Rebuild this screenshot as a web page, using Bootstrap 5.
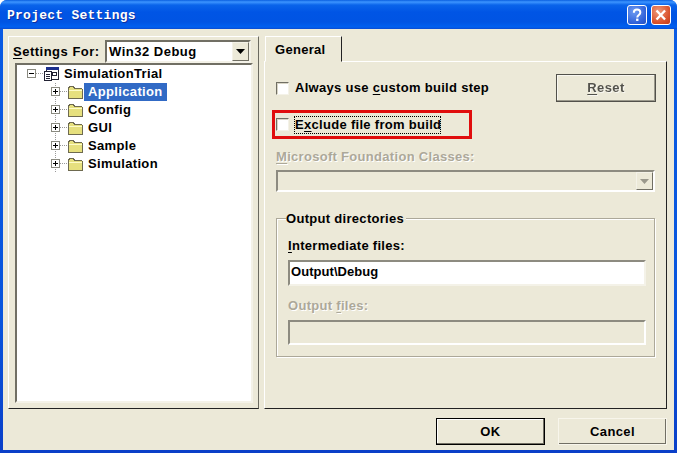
<!DOCTYPE html>
<html lang="en"><head><meta charset="utf-8"><title>Project Settings</title>
<link href="https://cdn.jsdelivr.net/npm/bootstrap@5.3.0/dist/css/bootstrap.min.css" rel="stylesheet">
<style>
html,body{margin:0;height:453px;overflow:hidden;background:#fff}
body{font:bold 13px/16px "Liberation Sans",Arial,sans-serif;letter-spacing:.3px;color:#000}
.win{width:677px;height:453px;border-radius:7px 7px 0 0;overflow:hidden;background:linear-gradient(#0a5be4,#0855dd 70%,#0a3fc8);padding:0 3px 3px}
.titlebar{height:29px;margin:0 -3px;padding:0 6px 0 7px;background:linear-gradient(#0a5fe0 0,#3d95ff 2px,#0a64ea 5px,#0055e5 12px,#0054e3 22px,#0060f0 27px,#0a4ad0 29px)}
.ttl{font:bold 13px "Liberation Mono",monospace;letter-spacing:.25px;color:#fff;text-shadow:1px 1px 0 #0f2f9c;padding-top:2px}
.capbtn{width:20px;height:20px;border:1px solid #fff;border-radius:3px;display:block}
.cap-help{background:radial-gradient(circle at 35% 30%,#6f9cf2,#2f60d8 70%,#2350c0)}
.cap-close{background:radial-gradient(circle at 35% 30%,#ef9a7a,#d9522c 65%,#c03a18)}
.client{height:421px;background:#ece9d8}
.bodyrow{height:380px;padding:7px 7px 0 5px;gap:5px}
.leftpane{width:251px;height:373px;border:1px solid;border-color:#fff #6b6a60 #222 #fff;padding:3px 5px 5px 6px}
.lbl-for{width:90px;margin-left:-2px;margin-right:2px;letter-spacing:.5px}
.combo{width:146px;height:23px;background:#fff;border:2px solid;border-color:#716f64 #f4f2e8 #f4f2e8 #716f64;padding-left:2px;font-size:13px;letter-spacing:.5px;line-height:19px}
.dropbtn{width:17px;height:100%;background:#ece9d8;border:1px solid;border-color:#f4f2e8 #716f64 #716f64 #f4f2e8;flex:none}
.combo-dis{width:379px;height:22px;background:#ece9d8;border:2px solid;border-color:#8d8b80 #fff #fff #8d8b80}
.treebox{height:340px;width:238px;background:#fff;border:2px solid;border-color:#716f64 #f4f2e8 #f4f2e8 #716f64}
.trow{height:18px}
.tname{line-height:18px;padding:0 4px;height:18px;letter-spacing:.35px}
.tsel{background:#316ac5;color:#fff}
.rightpane{width:403px}
.tabhead{height:26px;width:77px;margin-left:1px;border:1px solid;border-color:#fff #222 #ece9d8 #fff;padding:5px 0 0 9px;margin-bottom:-1px;position:relative;z-index:1;background:#ece9d8}
.tabbody{height:348px;border:1px solid;border-color:#fff #222 #222 #fff;padding:12px 10px 0 11px}
.cbx{width:13px;height:13px;background:#fff;border:1px solid;border-color:#716f64 #f4f2e8 #f4f2e8 #716f64;flex:none;box-shadow:inset 1px 1px 0 #d8d5c6}
.btnxp{background:#ece9d8;border:1px solid #000;border-radius:0;box-shadow:inset -1px -1px 0 #716f64,inset 1px 1px 0 #fff;font-weight:bold;padding:0;color:#000;--bs-btn-hover-bg:#ece9d8;letter-spacing:.4px;font-size:13px}
.btn-reset{width:100px;height:28px;color:#aca899;text-shadow:1px 1px 0 #fff}
.btn-foot{width:109px;height:27px}
.btn-cancel{border-color:#f8f6ec;box-shadow:inset -1px -1px 0 #716f64}
.ckgap{margin-left:6px}
.redbox{width:200px;height:29px;margin:8px 0 0 -4px;border:3px solid #e00d0d;padding-left:1px}
.dotted{border:1px dotted #000;margin-left:5px;width:147px;height:18px;line-height:15px;white-space:nowrap}
.dis{color:#aca899;text-shadow:1px 1px 0 #fff}
.lbl-mfc{margin:10px 0 5px}
.grp{margin-top:26px;width:379px;height:139px;border:1px solid #aca899;box-shadow:1px 1px 0 #fff,inset 1px 1px 0 #fff;padding:0 8px 0 11px}
.grp-ttl{margin:-8px 0 0 -2px;padding:0 2px 0 0;background:#ece9d8;width:max-content}
.lbl-g{margin:11px 0 6px}
.lbl-o{margin-top:12px}
.field{width:358px;height:26px;background:#fff;border:2px solid;border-color:#8d8b80 #f4f2e8 #f4f2e8 #8d8b80;padding-left:1px;line-height:19px;letter-spacing:.05px;font-size:13px}
.field-off{background:#ece9d8;height:25px;border-color:#8d8b80 #fff #fff #8d8b80}
.foot{padding:9px 7px 0 0;gap:13px}
u{text-underline-offset:2px}
</style></head><body>
<div class="win">
 <div class="titlebar d-flex align-items-center justify-content-between">
  <span class="ttl">Project Settings</span>
  <span class="d-flex gap-1">
   <svg class="capbtn cap-help" viewBox="0 0 20 20" aria-label="Help"><path d="M6.500 7.500C6.500 5 8.200 4 10 4c2.200 0 3.700 1.300 3.700 3.200 0 2.800-3.400 2.700-3.400 5.600" fill="none" stroke="#fff" stroke-width="2.200"/><rect x="9" y="14" width="2.600" height="2.600" fill="#fff"/></svg>
   <svg class="capbtn cap-close" viewBox="0 0 20 20" aria-label="Close"><path d="M5 5l9.500 10M14.500 5L5 15" stroke="#fff" stroke-width="2.600" fill="none"/></svg>
  </span>
 </div>
 <div class="client">
  <div class="d-flex bodyrow">
   <div class="leftpane">
    <div class="d-flex align-items-center"><span class="lbl-for"><u>S</u>ettings For:</span>
     <div class="combo d-flex justify-content-between align-items-center"><span>Win32 Debug</span>
      <span class="dropbtn d-flex align-items-center justify-content-center"><svg width="9" height="5" viewBox="0 0 9 5"><path d="M0 0h9L4.500 5z" fill="#000"/></svg></span></div></div>
    <div class="treebox">
     <div class="trow d-flex">
      <svg width="43" height="18" viewBox="0 0 43 18"><g shape-rendering="crispEdges"><rect x="10.500" y="4.500" width="8" height="8" fill="#fff" stroke="#8a8a80"/><path d="M12 8.500h5" stroke="#000"/><path d="M19 8.500h8" stroke="#999" stroke-dasharray="1 1"/>
       <rect x="29.500" y="2.500" width="12" height="12" fill="#fff" stroke="#223"/><rect x="29" y="2" width="13" height="3" fill="#1c2f8c"/><path d="M35 7.500h4v3h-4z" stroke="#223" fill="none"/><rect x="27.500" y="6.500" width="7" height="9" fill="#fff" stroke="#223"/><path d="M29 9h4M29 11h4M29 13h4" stroke="#223"/></g></svg>
      <span class="tname">SimulationTrial</span></div>
     <div class="trow d-flex">
      <svg width="67" height="18" viewBox="0 0 67 18"><use href="#kid"/></svg><span class="tname tsel">Application</span></div>
     <div class="trow d-flex"><svg width="67" height="18" viewBox="0 0 67 18"><use href="#kid"/></svg><span class="tname">Config</span></div>
     <div class="trow d-flex"><svg width="67" height="18" viewBox="0 0 67 18"><use href="#kid"/></svg><span class="tname">GUI</span></div>
     <div class="trow d-flex"><svg width="67" height="18" viewBox="0 0 67 18"><use href="#kid"/></svg><span class="tname">Sample</span></div>
     <div class="trow d-flex"><svg width="67" height="18" viewBox="0 0 67 18"><use href="#kid"/></svg><span class="tname">Simulation</span></div>
    </div>
   </div>
   <div class="rightpane">
    <div class="tabhead">General</div>
    <div class="tabbody">
     <div class="d-flex align-items-center justify-content-between">
      <div class="d-flex align-items-center"><span class="cbx"></span><span class="ckgap">Always use <u>c</u>ustom build step</span></div>
      <button class="btn btnxp btn-reset" type="button" disabled><u>R</u>eset</button>
     </div>
     <div class="redbox d-flex align-items-center"><span class="cbx"></span><span class="dotted">E<u>x</u>clude file from build</span></div>
     <div class="dis lbl-mfc"><u>M</u>icrosoft Foundation Classes:</div>
     <div class="combo-dis d-flex justify-content-end"><span class="dropbtn d-flex align-items-center justify-content-center"><svg width="9" height="5" viewBox="0 0 9 5"><path d="M0 0h9L4.500 5z" fill="#9a988c"/></svg></span></div>
     <div class="grp">
      <div class="grp-ttl">Output directories</div>
      <div class="lbl-g"><u>I</u>ntermediate files:</div>
      <div class="field">Output\Debug</div>
      <div class="lbl-g lbl-o dis">Output <u>f</u>iles:</div>
      <div class="field field-off"></div>
     </div>
    </div>
   </div>
  </div>
  <div class="d-flex justify-content-end foot">
   <button class="btn btnxp btn-foot" type="button">OK</button>
   <button class="btn btnxp btn-foot btn-cancel" type="button">Cancel</button>
  </div>
 </div>
</div>
<svg width="0" height="0" class="d-block"><defs><g id="kid" shape-rendering="crispEdges">
 <path d="M38.500 0V18" stroke="#999" stroke-dasharray="1 1"/>
 <rect x="34.500" y="4.500" width="8" height="8" fill="#fff" stroke="#8a8a80"/><path d="M36 8.500h5M38.500 6v5" stroke="#000"/><path d="M43 8.500h7" stroke="#999" stroke-dasharray="1 1"/>
 <path d="M51.500 15.500V5.500l1-2h4l1 2h7l1 1v9z" fill="#e6e07e" stroke="#6e6a50"/><path d="M52 7.500h13" stroke="#fdfbc8"/>
</g></defs></svg>
</body></html>
